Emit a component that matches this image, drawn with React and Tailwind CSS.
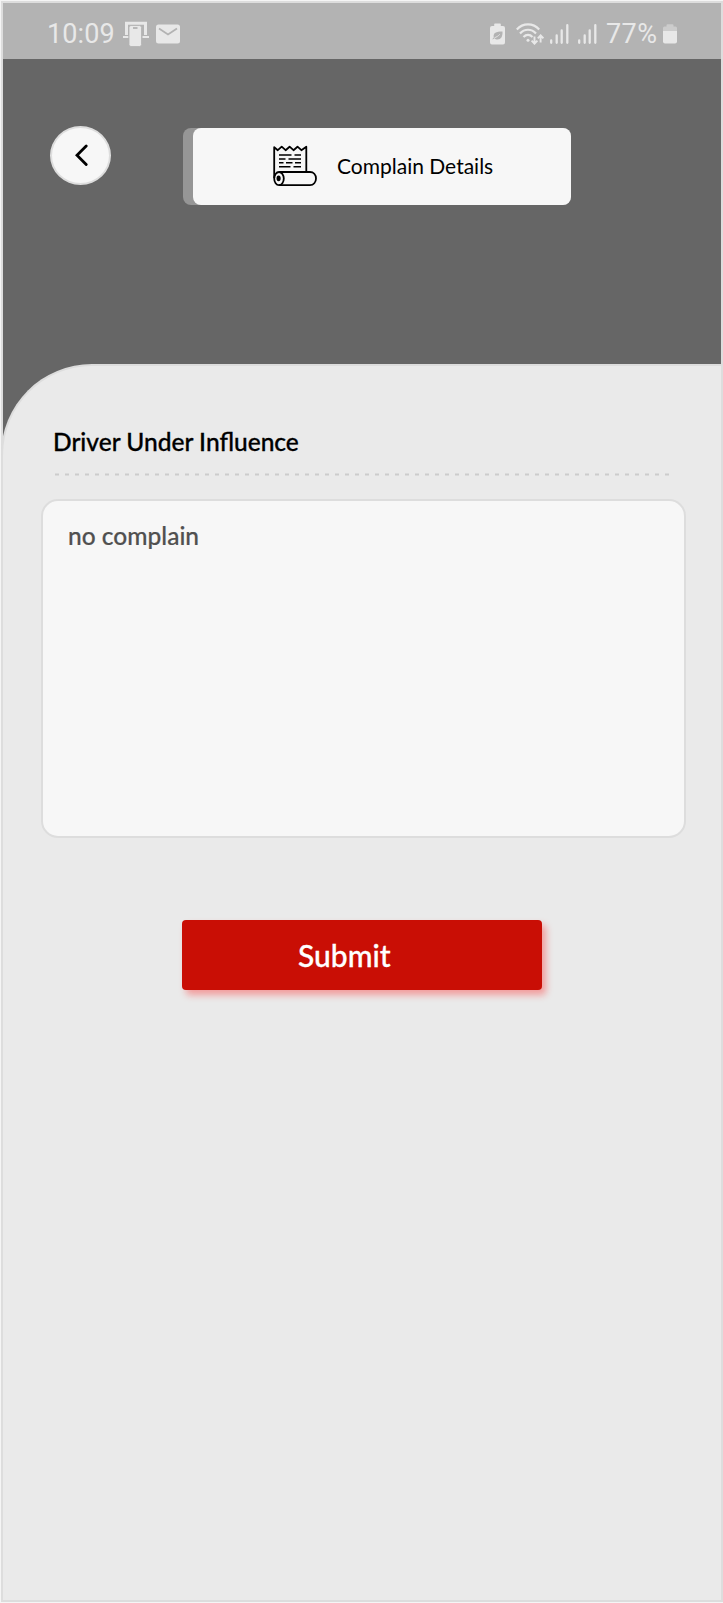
import React from "react";

function DeviceIcon() {
  return (
    <svg className="ml-[9px] h-[26px] w-[26px] shrink-0" viewBox="0 0 26 26" fill="none">
      <path d="M3.5 14V2.3H22.5V14" stroke="#e8e8e8" strokeWidth="3" />
      <path d="M0 16h5.5M19.5 16H26" stroke="#e8e8e8" strokeWidth="2.2" />
      <rect x="6" y="4.5" width="12.5" height="21" rx="2" fill="#e8e8e8" stroke="#b3b3b3" strokeWidth="0.8" />
      <path d="M10 7h4.5" stroke="#b3b3b3" strokeWidth="1.8" />
    </svg>
  );
}

function MailIcon() {
  return (
    <svg className="ml-[7px] h-[20px] w-[24px] shrink-0" viewBox="0 0 24 20" fill="none">
      <rect width="24" height="19" y="0.5" rx="2.5" fill="#e8e8e8" />
      <path d="M3 4.5l9 6 9-6" stroke="#b3b3b3" strokeWidth="1.8" />
    </svg>
  );
}

function EcoBatteryIcon() {
  return (
    <svg className="h-[22px] w-[15px] shrink-0" viewBox="0 0 15 22" fill="none">
      <path d="M5 0.5h5a.8.8 0 0 1 .8.8V3H13a2 2 0 0 1 2 2v14.500a2 2 0 0 1-2 2H2a2 2 0 0 1-2-2V5a2 2 0 0 1 2-2h2.200V1.300A.8.8 0 0 1 5 .5z" fill="#e8e8e8" />
      <path d="M12.500 8.500c.3 5-1.500 8-5 8-1.300 0-2.400-.4-3-1.200-.7.300-1.300 1.200-2 1.200.2-1.200.8-1.700 1.300-2C2.800 10 6 8.500 12.500 8.500z" fill="#b3b3b3" />
      <path d="M4.500 14.700c2-.6 3.800-1.700 5.300-3.400" stroke="#e8e8e8" strokeWidth="0.9" />
    </svg>
  );
}

function WifiIcon() {
  return (
    <svg className="ml-[11px] h-[22px] w-[28px] shrink-0" viewBox="0 0 28 22" fill="none" stroke="#e8e8e8">
      <path d="M.8 6.500C7-.3 17-.3 23.200 6.500" strokeWidth="2.200" />
      <path d="M4 10.500c4.500-5 11.500-5 16 0" strokeWidth="2.200" />
      <path d="M7.500 14c2.700-2.800 6.300-2.800 9 0" strokeWidth="2.200" />
      <circle cx="12" cy="17.300" r="1.500" fill="#e8e8e8" stroke="none" />
      <path d="M18.500 13.500v7M15.600 17.700l2.900 3 2.900-3M24.600 19.500V12.500M21.800 15.300l2.800-2.900 2.800 2.900" strokeWidth="1.900" />
    </svg>
  );
}

function SignalIcon({ className }) {
  return (
    <svg className={`h-[20px] w-[19px] shrink-0 ${className}`} viewBox="0 0 19 20" stroke="#e8e8e8" strokeWidth="2.3" strokeLinecap="round">
      <path d="M1.200 16.500V18.800M6.700 11.500V18.800M11.700 6.500V18.800M17.300 1.200V18.800" />
    </svg>
  );
}

function BatteryIcon() {
  return (
    <svg className="ml-[5px] h-[20px] w-[14px] shrink-0" viewBox="0 0 14 20">
      <path d="M0 7V4a1.500 1.500 0 0 1 1.500-1.500h2V1.200A1 1 0 0 1 4.500 .200h5a1 1 0 0 1 1 1v1.300h2A1.500 1.500 0 0 1 14 4v3z" fill="#cccccc" />
      <path d="M0 7h14v10.500a2 2 0 0 1-2 2H2a2 2 0 0 1-2-2z" fill="#e8e8e8" />
    </svg>
  );
}

function ScrollIcon() {
  return (
    <svg className="h-[42px] w-[44px] shrink-0" viewBox="0 0 44 42" fill="none" stroke="#000" strokeWidth="1.800" strokeLinejoin="round">
      <path d="M1.200 33V2.200L4.800 5.200 8.700 1.700 12.600 5.200 16.600 1.700 20.500 5.200 24.500 1.700 28.400 5.200 33.300 1.700V26.700" />
      <path d="M6 27H37C40.500 27 43 29.800 43 33.500S40.500 40.200 37 40.200H6" />
      <ellipse cx="6" cy="33.600" rx="4.800" ry="6.600" />
      <ellipse cx="5.600" cy="33.300" rx="1.200" ry="2" fill="#000" />
      <path d="M6 10H18.500M21.500 10H28M6 14H12.500M15.500 14H28M6 17.800H10.500M13 17.800H19.500M22 17.800H28M6 21.700H17.500M20.500 21.700H28" strokeWidth="1.600" />
    </svg>
  );
}

function StatusBar() {
  return (
    <div className="flex h-[56px] shrink-0 items-center justify-between bg-[#b3b3b3] pl-[44px] pr-[44px] pt-[6px] font-['Roboto',sans-serif] text-[27px] leading-none text-[#e8e8e8]">
      <div className="flex items-center">
        <span className="w-[67px] whitespace-nowrap tracking-[0.1px]">10:09</span>
        <DeviceIcon />
        <MailIcon />
      </div>
      <div className="flex items-center">
        <EcoBatteryIcon />
        <WifiIcon />
        <SignalIcon className="ml-[6px]" />
        <SignalIcon className="ml-[9px]" />
        <span className="ml-[9px] w-[52px] whitespace-nowrap tracking-[0.4px]">77%</span>
        <BatteryIcon />
      </div>
    </div>
  );
}

export default function App() {
  return (
    <div className="h-[1603px] w-[723px] overflow-hidden bg-[#f5f5f5] pb-px pl-px pt-px font-['Lato',sans-serif]">
      <div className="flex h-[1601px] w-[722px] flex-col border-2 border-[#dddddd] bg-[#666666]">
        <StatusBar />
        <header className="flex h-[304.5px] shrink-0 items-start">
          <button className="ml-[47px] mt-[66.5px] flex h-[59px] w-[61px] items-center justify-center rounded-[50%] border-2 border-[#dddddd] bg-[#f7f7f7]">
            <svg className="h-[22px] w-[14px]" viewBox="0 0 14 22" fill="none" stroke="#000" strokeWidth="2.800" strokeLinecap="round">
              <path d="M12.200 2L3 11.200 12.200 20.600" />
            </svg>
          </button>
          <div className="ml-[72px] mt-[68.6px] rounded-[8px] bg-[#969696] pl-[10px]">
            <div className="flex h-[77px] w-[378px] items-center rounded-[8px] bg-[#f7f7f7] pl-[80px]">
              <ScrollIcon />
              <h1 className="ml-[20px] whitespace-nowrap pb-[2px] text-[21px] leading-none text-black">Complain Details</h1>
            </div>
          </div>
        </header>
        <main className="-ml-[2px] flex w-[720px] flex-1 flex-col rounded-tl-[91px] border-l-2 border-t-2 border-[#dddddd] bg-[#eaeaea]">
          <h2 className="ml-[50px] mt-[61px] h-[30px] shrink-0 whitespace-nowrap text-[24.5px] font-medium leading-[30px] text-black [-webkit-text-stroke:0.3px]">Driver Under Influence</h2>
          <svg className="ml-[52px] mt-[16px] h-[3px] w-[616px] shrink-0" viewBox="0 0 616 3" stroke="#cccccc" strokeWidth="2" strokeDasharray="4 6">
            <path d="M0 1.500H616" />
          </svg>
          <div className="ml-[38px] mt-[23.5px] h-[339px] w-[644.5px] shrink-0 rounded-[17px] border-2 border-[#dddddd] bg-[#f7f7f7] pl-[25px] pt-[20px]">
            <p className="whitespace-nowrap text-[24.5px] font-medium leading-[30px] text-[#505050] [-webkit-text-stroke:0.2px]">no complain</p>
          </div>
          <button className="ml-[179px] mt-[82px] flex h-[70px] w-[360px] shrink-0 items-center rounded-[4px] bg-[#c90e05] pl-[116px] text-[30px] font-medium leading-none text-white shadow-[4px_5px_7px_rgba(255,40,40,0.4)] [-webkit-text-stroke:0.3px]">
            Submit
          </button>
        </main>
      </div>
    </div>
  );
}
